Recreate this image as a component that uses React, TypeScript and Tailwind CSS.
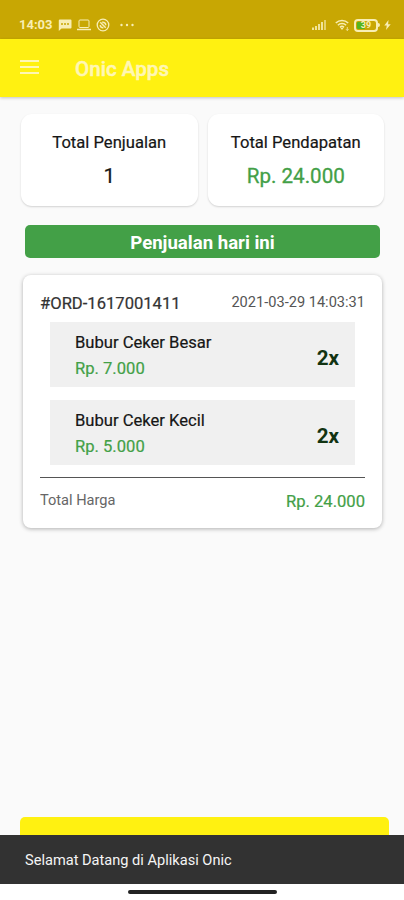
import type { ReactNode } from "react";

type Item = {
  name: string;
  price: string;
  qty: number;
};

const items: Item[] = [
  { name: "Bubur Ceker Besar", price: "Rp. 7.000", qty: 2 },
  { name: "Bubur Ceker Kecil", price: "Rp. 5.000", qty: 2 },
];

const StatusBar = () => {
  return (
    <div className="flex h-[39px] shrink-0 items-end justify-between bg-[#c8a703] pb-[6px] pl-[19px] pr-[13px] text-[#f8eeb4]">
      <div className="flex h-4 items-center">
        <span className="w-[39px] text-[13px] font-bold leading-4">14:03</span>
        <svg width="14" height="12" viewBox="0 0 14 12" fill="none">
          <path d="M1.5 0.5h11a1 1 0 0 1 1 1v7a1 1 0 0 1-1 1H3.5L.8 12V1.3z" fill="currentColor" />
          <path d="M3 5h8" stroke="#c8a703" strokeWidth="1.3" strokeDasharray="2 1" />
        </svg>
        <svg className="ml-[5px]" width="14" height="12" viewBox="0 0 14 12" fill="none" stroke="currentColor">
          <rect x="2" y="1" width="10" height="7.5" rx="1" />
          <path d="M0 10.5h14" strokeWidth="1.5" />
        </svg>
        <svg className="ml-[5px]" width="14" height="14" viewBox="0 0 14 14" fill="none" stroke="currentColor">
          <circle cx="7" cy="7" r="5.8" strokeWidth="1.3" />
          <path d="M4.3 4.3l5.4 5.4M4.2 7.2a3 3 0 0 0 3.2 2.6M6.2 4.2a3 3 0 0 1 3.6 3" strokeWidth="1.5" />
        </svg>
        <svg className="ml-[9px]" width="16" height="4" viewBox="0 0 16 4" fill="currentColor">
          <circle cx="2.5" cy="2" r="1.2" />
          <circle cx="8" cy="2" r="1.2" />
          <circle cx="13.5" cy="2" r="1.2" />
        </svg>
      </div>

      <div className="flex h-4 items-center">
        <svg width="15" height="12" viewBox="0 0 15 12" fill="currentColor">
          <path d="M0 8.5h2V11H0zM3 7h2v4H3zM6 5h2v6H6zM9 3h2v8H9z" opacity="0.85" />
          <path d="M12 1h2v10h-2z" opacity="0.6" />
        </svg>
        <svg className="ml-[8px]" width="15" height="12" viewBox="0 0 15 12" fill="none" stroke="currentColor" strokeWidth="1.6">
          <path d="M.8 4a8.8 8.8 0 0 1 12.4 0M2.9 6.2a5.8 5.8 0 0 1 8.2 0M5 8.3a2.9 2.9 0 0 1 4 0" />
          <path d="M5.5 9L7 11l1.5-2z" fill="currentColor" stroke="none" />
          <path d="M12.3 8v3.5M11 10.2l1.3 1.3 1.3-1.3" strokeWidth="0.8" />
        </svg>
        <div className="relative ml-[4px] flex h-[13px] w-[24px] items-center rounded-[4px] border-2 border-[#f8eeb4] p-px">
          <div className="h-full w-2 rounded-[1px] bg-[#55b51f]" />
          <span className="absolute inset-0 text-center text-[9px] font-bold leading-[9px]">39</span>
        </div>
        <div className="h-1 w-0.5 rounded-r-sm bg-[#f8eeb4]" />
        <svg className="ml-[4px]" width="7" height="10" viewBox="0 0 7 10" fill="currentColor">
          <path d="M4.5 0L.3 5.5h2.5L2 10l4.7-5.8H4.1z" />
        </svg>
      </div>
    </div>
  );
};

const AppBar = () => {
  return (
    <div className="z-10 flex h-[58px] shrink-0 items-center bg-[#fff111] pl-[20px] text-[#fff7b4] shadow-[0_1px_3px_rgba(0,0,0,0.22)]">
      <div className="flex w-[55px] flex-col gap-[4px] pb-[3px]">
        <span className="h-[2px] w-[19px] bg-current" />
        <span className="h-[2px] w-[19px] bg-current" />
        <span className="h-[2px] w-[19px] bg-current" />
      </div>
      <h1 className="pt-0.5 text-[20.6px] font-medium leading-6 [-webkit-text-stroke:0.5px]">Onic Apps</h1>
    </div>
  );
};

const StatCard = ({ label, children }: { label: string; children: ReactNode }) => {
  return (
    <div className="flex h-[92px] flex-1 flex-col items-center rounded-[11px] bg-white pt-[19px] shadow-[0_1px_2px_rgba(0,0,0,0.16)]">
      <p className="text-[16.6px] leading-5 text-[#161616] [-webkit-text-stroke:0.2px]">{label}</p>
      {children}
    </div>
  );
};

const OrderItem = ({ name, price, qty }: Item) => {
  return (
    <div className="flex h-[65px] items-center justify-between bg-[#f0f0f0] pl-[25px] pr-[16px]">
      <div className="pt-0.5 text-[16.6px] [-webkit-text-stroke:0.2px]">
        <p className="leading-[26px] text-[#161616]">{name}</p>
        <p className="leading-[26px] text-[#43a047]">{price}</p>
      </div>
      <span className="pt-1.5 text-[20.6px] font-bold leading-6 text-[#123312]">{qty}x</span>
    </div>
  );
};

const App = () => {
  return (
    <div className="flex h-[900px] w-[404px] flex-col overflow-hidden bg-[#fafafa] font-[Roboto,sans-serif]">
      <StatusBar />
      <AppBar />

      <main className="flex min-h-0 flex-1 flex-col pt-[17px]">
        <div className="flex gap-[10px] pl-[21px] pr-[20px]">
          <StatCard label="Total Penjualan">
            <p className="mt-[11px] text-[20.6px] leading-6 text-[#161616] [-webkit-text-stroke:0.2px]">1</p>
          </StatCard>
          <StatCard label="Total Pendapatan">
            <p className="mt-[11px] text-[20.6px] leading-6 text-[#43a047] [-webkit-text-stroke:0.3px]">Rp. 24.000</p>
          </StatCard>
        </div>

        <div className="ml-[25px] mr-[24px] mt-[19px] flex h-[33px] items-center justify-center rounded-[5px] bg-[#43a047] pt-1 text-[18.6px] font-bold text-white">
          Penjualan hari ini
        </div>

        <section className="ml-[23px] mr-[22px] mt-[17px] h-[253px] rounded-[8px] bg-white px-[17px] pt-[17px] shadow-[0_1px_4px_rgba(0,0,0,0.3)]">
          <div className="flex h-[30px] justify-between">
            <p className="pt-0.5 text-[16.6px] leading-5 text-[#333] [-webkit-text-stroke:0.2px]">#ORD-1617001411</p>
            <p className="text-[14.6px] leading-5 text-[#555]">2021-03-29 14:03:31</p>
          </div>
          <div className="ml-[10px] mr-[10px] flex flex-col gap-[13px]">
            {items.map((item) => (
              <OrderItem key={item.name} {...item} />
            ))}
          </div>
          <div className="mt-[12px] flex justify-between border-t-[1.5px] border-[#555] pt-[12px]">
            <p className="text-[14.6px] leading-5 text-[#666]">Total Harga</p>
            <p className="text-[16.6px] leading-6 text-[#43a047] [-webkit-text-stroke:0.2px]">Rp. 24.000</p>
          </div>
        </section>

        <div className="ml-[20px] mr-[15px] mt-auto h-[18px] rounded-t-[5px] bg-[#fff111]" />
      </main>

      <div className="flex h-[49px] shrink-0 items-center bg-[#323232] pl-[25px] pt-[3px] text-[14.6px] text-[#f5f5f5]">
        Selamat Datang di Aplikasi Onic
      </div>
      <div className="flex h-4 shrink-0 justify-center bg-white pt-1.5">
        <div className="h-1 w-[149px] rounded-full bg-[#222]" />
      </div>
    </div>
  );
};

export default App;
